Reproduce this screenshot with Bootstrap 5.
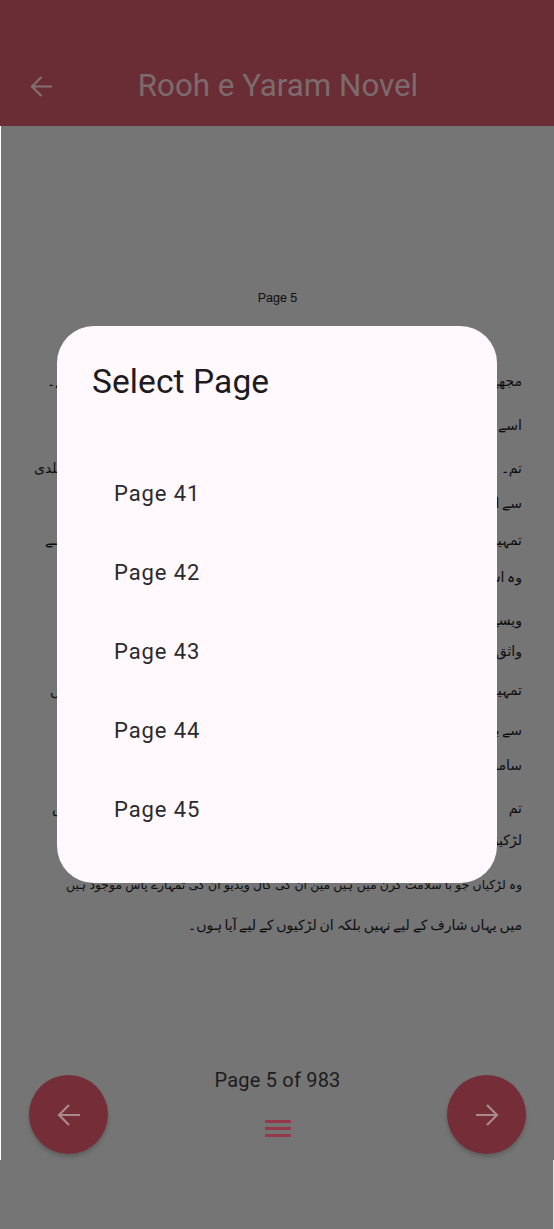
<!doctype html>
<html lang="en"><head><meta charset="utf-8">
<link href="https://cdn.jsdelivr.net/npm/bootstrap@5.3.0/dist/css/bootstrap.min.css" rel="stylesheet">
<style>
html,body{margin:0;height:1229px;overflow:hidden}
body{background:#757575;font-family:Roboto,sans-serif;color:#1d1b20;position:relative}
.shell-x{height:1160px;border-left:1px solid #fff;position:relative}
.tail-x{height:69px;border-right:1px solid #ddd}
.appbar-x{height:126px;margin-left:-1px;background:#6b2d35;padding:66px 0 0 29px;border-left:1px solid #6b2d35}
.appbar-x .ttl{flex:1;text-align:center;font-size:31.3px;line-height:40px;color:#7c6b6d;padding-right:52px;margin-top:-21px;padding-left:1px}
.back-x{width:23px;height:23px;display:block;margin-top:-20px}
.pg-label{margin-top:164px;height:81px;text-align:center;font:12.5px/16px "Liberation Sans",sans-serif;color:#151515;-webkit-text-stroke:.15px #151515}
.page-x{display:grid;grid-template-rows:44px 43px 35px 37px 37px 43px 31px 39px 40px 35px 43px 32px 45px 40px 20px;padding-right:32px}
.ln{font:14px/20px "DejaVu Sans",sans-serif;word-spacing:-1.6px;color:#0e0e0e;direction:rtl;white-space:nowrap;text-align:right}
.fit{text-align:justify;text-align-last:justify;white-space:normal;height:20px}
.to47{margin-left:46px}.to34{margin-left:33px}.to45{margin-left:44px}.to50{margin-left:49px}.to52{margin-left:51px}.to66{margin-left:65px}
.cond{font-size:12.4px;word-spacing:-1.2px}
.sheet{position:absolute;left:57px;top:326px;width:440px;height:557px;background:#fff9fe;border-radius:37px;padding:36px 0 0 35px;z-index:3}
.sheet h2{font:400 33.5px/40px Roboto,sans-serif;color:#1d1b20;margin:0 0 52px;letter-spacing:.1px}
.item-x{font:400 22px/79px Roboto,sans-serif;letter-spacing:.9px;padding-left:22px;color:#2b2a2e}
.foot{margin-top:134px;padding:0 28px 0 28px;justify-content:space-between;align-items:flex-start}
.fab-x{width:79px;height:79px;margin-top:6px;border-radius:50%;background:#752d38;box-shadow:0 3px 4px rgba(0,0,0,.2);border:0;padding:0}
.mid-x{text-align:center;font-size:20px;line-height:24px;color:#1c1c1c;letter-spacing:.2px;padding-top:0;margin-top:-1px}
.menu-x{display:block;margin:27px auto 0}
</style></head><body>
<div class="shell-x">
<div class="appbar-x d-flex align-items-center">
<svg class="back-x" viewBox="0 0 24 24" fill="none" stroke="#83706f" stroke-width="2.2"><path d="M23 12H2M12 2 2 12l10 10"/></svg>
<div class="ttl">Rooh e Yaram Novel</div>
</div>
<div class="pg-label">Page 5</div>
<div class="page-x">
<div class="ln fit to47">مجھے اس بات کا پتا ہے کہ تم یہاں آئے ہو اور تم نے کہا تھا کہ آؤ گے۔</div>
<div class="ln">اسے کہا کہ تم کو یہاں سے جانا ہوگا</div>
<div class="ln fit to34">تم۔ تم کو جانا ہے اس لیے جلدی کرو ورنہ دیر ہو جائے گی جلدی</div>
<div class="ln">سے اٹھو اور چلو میرے ساتھ</div>
<div class="ln fit to45">تمہیں بتانا ضروری ہے کہ یہ بات سچ ہے اور سب جانتے ہیں یہ ہے</div>
<div class="ln">وہ اس کے پاس گیا</div>
<div class="ln">ویسے بھی یہ کام آسان نہیں</div>
<div class="ln">واثق نے کہا</div>
<div class="ln fit to50">تمہیں پتا ہے کہ میں کون ہوں اور کیوں ہوں یہاں اس وقت میں</div>
<div class="ln">سے بات کرو</div>
<div class="ln">سامنے آ جاؤ</div>
<div class="ln fit to52">تم جانتے ہو کہ وہ لڑکیاں کہاں ہیں اور کیوں ہیں میرے پاس</div>
<div class="ln">لڑکیوں کے لیے</div>
<div class="ln fit to66 cond">وہ لڑکیاں جو با سلامت کرن میں ہیں مین ان کی کال ویڈیو ان کی تمہارے پاس موجود ہیں</div>
<div class="ln">میں یہاں شارف کے لیے نہیں بلکہ ان لڑکیوں کے لیے آیا ہوں۔</div>
</div>
<div class="foot d-flex">
<button class="fab-x d-flex align-items-center justify-content-center" aria-label="Previous"><svg width="24" height="24" viewBox="0 0 24 24" fill="none" stroke="#a98a8c" stroke-width="2.2"><path d="M23 12H2M12 2 2 12l10 10"/></svg></button>
<div class="mid-x">Page 5 of 983
<svg class="menu-x" width="26" height="20" viewBox="0 0 26 20" fill="#96394a"><rect y="1" width="26" height="3"/><rect y="8" width="26" height="3"/><rect y="15" width="26" height="3"/></svg></div>
<button class="fab-x d-flex align-items-center justify-content-center" aria-label="Next"><svg width="24" height="24" viewBox="0 0 24 24" fill="none" stroke="#a98a8c" stroke-width="2.2"><path d="M1 12h21M12 2l10 10-10 10"/></svg></button>
</div>
</div>
<div class="tail-x"></div>
<div class="sheet">
<h2>Select Page</h2>
<div class="item-x">Page 41</div>
<div class="item-x">Page 42</div>
<div class="item-x">Page 43</div>
<div class="item-x">Page 44</div>
<div class="item-x">Page 45</div>
</div>
<script src="https://cdn.jsdelivr.net/npm/bootstrap@5.3.0/dist/js/bootstrap.bundle.min.js"></script>
</body></html>
